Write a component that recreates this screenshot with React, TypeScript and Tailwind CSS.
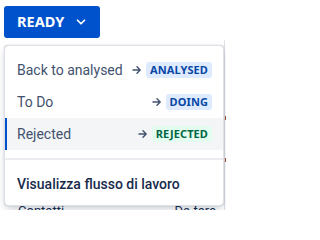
import { ChevronDown } from "lucide-react";

const transitions = [
  { label: "Back to analysed", status: "ANALYSED", tone: "blue" },
  { label: "To Do", status: "DOING", tone: "blue" },
  { label: "Rejected", status: "REJECTED", tone: "green", active: true },
];

function Lozenge({ status, tone }: { status: string; tone: string }) {
  const toneClass = tone === "green" ? "bg-[#e3fcef] text-[#006644]" : "bg-[#deebff] text-[#0747a6]";
  return (
    <span className={`rounded-[3px] px-[4px] font-['Noto_Sans',sans-serif] text-[11px] font-bold leading-[16px] tracking-[0.1px] ${toneClass}`}>{status}</span>
  );
}

function ArrowRight() {
  return (
    <svg width="10" height="10" viewBox="0 0 10 10" className="mr-[4px] text-[#42526e]">
      <path d="M1 5h7M5 1.8 8.2 5 5 8.2" fill="none" stroke="currentColor" strokeWidth="1.4" strokeLinecap="round" strokeLinejoin="round" />
    </svg>
  );
}

export default function App() {
  return (
    <div className="relative flex h-[210px] w-[226px] flex-col overflow-hidden bg-white font-['Roboto',sans-serif]">
      <div className="px-[4px] pt-[6px]">
        <button type="button" className="flex h-[32px] w-[96px] items-center gap-[10px] rounded-[3px] bg-[#0052cc] pl-[13px] font-['Noto_Sans',sans-serif] text-[14.5px] font-bold text-white">
          READY
          <ChevronDown size={14} strokeWidth={3} />
        </button>
      </div>

      {/* page content peeking out behind the popup */}
      <div className="mt-[2px] flex flex-1">
        <div className="flex flex-1 flex-col justify-end">
          <div className="flex justify-between pl-[18px] pr-[8px] text-[13px] leading-[11px] text-[#172b4d]">
            <span className="h-[5px] overflow-hidden">Contatti</span>
            <span className="h-[5px] overflow-hidden">Da fare</span>
          </div>
        </div>
        <div className="flex w-[2px] flex-col gap-[38px] border-l border-[#dfe1e6] pt-[76px]">
          <div className="h-[4px] w-[2px] bg-[#a0522d]" />
          <div className="h-[4px] w-[2px] bg-[#a0522d]" />
        </div>
      </div>

      <div className="absolute left-[4px] top-[45px] w-[220px] rounded-[4px] border border-[#dfe1e6] bg-white shadow-[0_4px_8px_-2px_rgba(9,30,66,0.25),0_0_1px_rgba(9,30,66,0.31)]">
        <div className="py-[8px]">
          {transitions.map((t) => (
            <div
              key={t.label}
              className={`flex h-[32px] items-center justify-between border-l-2 pl-[10px] pr-[11px] text-[14px] text-[#42526e] ${t.active ? "border-[#0052cc] bg-[#f4f5f7]" : "border-transparent"}`}
            >
              <span>{t.label}</span>
              <span className="flex items-center">
                <ArrowRight />
                <Lozenge status={t.status} tone={t.tone} />
              </span>
            </div>
          ))}
        </div>
        <div className="h-[2px] bg-[#ebecf0]" />
        <div className="pb-[5px] pt-[8px]">
          <div className="flex h-[32px] items-center pl-[12px] text-[14px] font-medium text-[#172b4d]">Visualizza flusso di lavoro</div>
        </div>
      </div>
    </div>
  );
}
